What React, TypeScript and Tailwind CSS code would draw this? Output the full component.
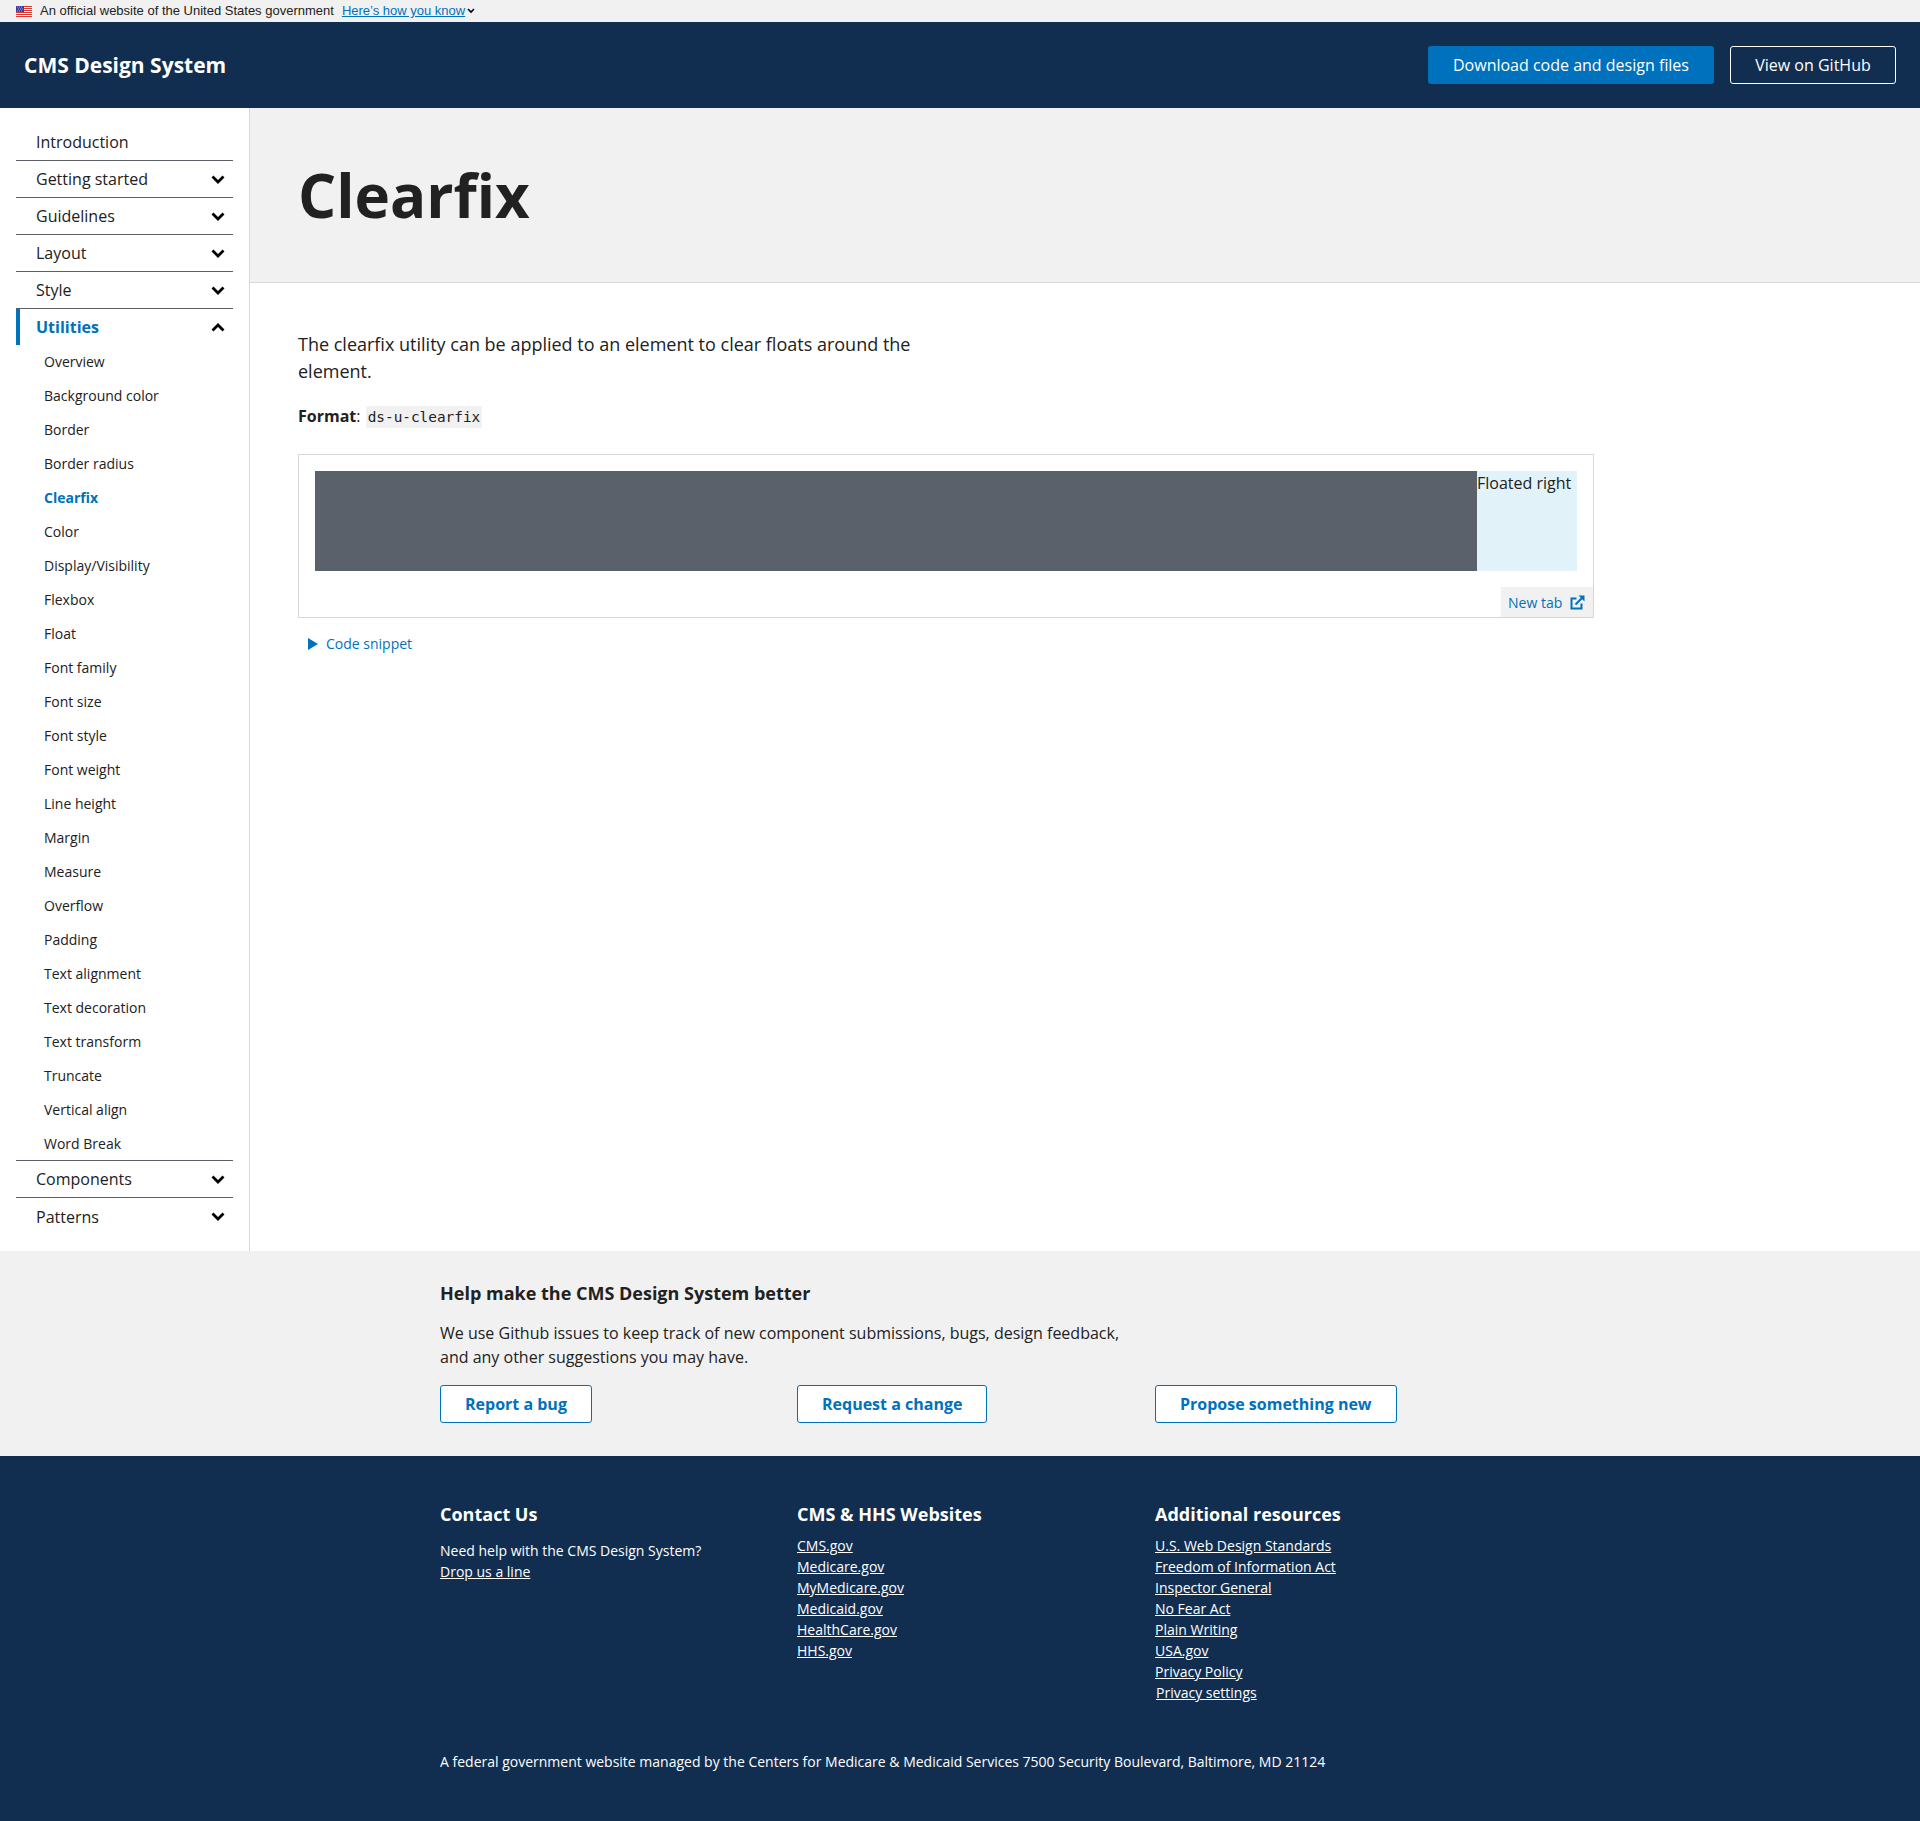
import React from 'react';

const utilities = [
  'Overview',
  'Background color',
  'Border',
  'Border radius',
  'Clearfix',
  'Color',
  'Display/Visibility',
  'Flexbox',
  'Float',
  'Font family',
  'Font size',
  'Font style',
  'Font weight',
  'Line height',
  'Margin',
  'Measure',
  'Overflow',
  'Padding',
  'Text alignment',
  'Text decoration',
  'Text transform',
  'Truncate',
  'Vertical align',
  'Word Break',
];

const hhsSites = ['CMS.gov', 'Medicare.gov', 'MyMedicare.gov', 'Medicaid.gov', 'HealthCare.gov', 'HHS.gov'];

const resources = [
  'U.S. Web Design Standards',
  'Freedom of Information Act',
  'Inspector General',
  'No Fear Act',
  'Plain Writing',
  'USA.gov',
  'Privacy Policy',
  'Privacy settings',
];

const Flag = () => (
  <svg width="16" height="11" viewBox="0 0 16 11" className="shrink-0">
    <rect width="16" height="11" fill="#fff" />
    <rect width="16" height="1" y="0" fill="#d83933" />
    <rect width="16" height="1" y="2" fill="#d83933" />
    <rect width="16" height="1" y="4" fill="#d83933" />
    <rect width="16" height="1" y="6" fill="#d83933" />
    <rect width="16" height="1" y="8" fill="#d83933" />
    <rect width="16" height="1" y="10" fill="#d83933" />
    <rect width="8" height="6" fill="#3b3b9e" />
    <path d="M1 1h1M3 1h1M5 1h1M2 3h1M4 3h1M6 3h1M1 5h1M3 5h1M5 5h1" stroke="#c9c9f0" strokeWidth="0.8" />
  </svg>
);

// chunky chevron, same shape as the font icon in the nav
const Chevron = ({ up }: { up?: boolean }) => (
  <svg width="14" height="9" viewBox="0 0 14 9" fill="none" stroke="#000" strokeWidth="2.8" className="shrink-0">
    <polyline points={up ? '1.5,7.5 7,2 12.5,7.5' : '1.5,1.5 7,7 12.5,1.5'} />
  </svg>
);

const NavRow = ({ label, last }: { label: string; last?: boolean }) => (
  <div
    className={
      'flex h-[37px] items-center justify-between pr-[8px] ' + (last ? '' : 'border-b border-[#5a5f68]')
    }
  >
    <span className="pl-[20px] text-[16px]">{label}</span>
    <Chevron />
  </div>
);

const Sidebar = () => (
  <aside className="w-[250px] shrink-0 border-r border-[#d6d7d9] px-[16px] pt-[16px] text-[#212121]">
    <div className="flex h-[37px] items-center border-b border-[#5a5f68] pl-[20px] text-[16px]">Introduction</div>
    <NavRow label="Getting started" />
    <NavRow label="Guidelines" />
    <NavRow label="Layout" />
    <NavRow label="Style" />
    <div className="flex h-[36px] items-center justify-between border-l-4 border-[#0071bc] pr-[8px]">
      <span className="pl-[16px] text-[16px] font-bold text-[#0071bc]">Utilities</span>
      <Chevron up />
    </div>
    <ul className="-mt-[1px] border-b border-[#5a5f68]">
      {utilities.map((item) => (
        <li
          key={item}
          className={
            'flex h-[34px] items-center pl-[28px] text-[14px] ' +
            (item === 'Clearfix' ? 'font-bold text-[#0071bc]' : '')
          }
        >
          {item}
        </li>
      ))}
    </ul>
    <NavRow label="Components" />
    <NavRow label="Patterns" last />
  </aside>
);

const App = () => {
  return (
    <div className="min-h-[1821px] bg-white font-['Open_Sans',sans-serif] text-[#212121]">
      {/* Gov banner */}
      <div className="flex h-[22px] items-center bg-[#f1f1f1] pl-[16px] font-['Liberation_Sans',sans-serif] text-[13px]">
        <Flag />
        <span className="ml-[8px]">An official website of the United States government</span>
        <a className="ml-[8px] text-[#0071bc] underline">Here’s how you know</a>
        <svg width="8" height="6" viewBox="0 0 8 6" fill="none" stroke="#000" strokeWidth="1.6" className="ml-[2px]">
          <polyline points="1,1 4,4 7,1" />
        </svg>
      </div>

      {/* Header */}
      <header className="flex h-[86px] items-center justify-between bg-[#112e51] px-[24px]">
        <div className="pt-[1px] text-[21px] font-bold text-white">CMS Design System</div>
        <div className="flex gap-[16px]">
          <a className="flex h-[38px] w-[286px] items-center justify-center rounded-[3px] bg-[#0071bc] text-[16px] text-white">
            Download code and design files
          </a>
          <a className="flex h-[38px] w-[166px] items-center justify-center rounded-[3px] border border-white text-[16px] text-white">
            View on GitHub
          </a>
        </div>
      </header>

      <div className="flex h-[1143px]">
        <Sidebar />
        <main className="min-w-0 flex-1">
          <div className="flex h-[175px] items-center border-b border-[#d6d7d9] bg-[#f1f1f1] pl-[48px]">
            <h1 className="text-[60px] leading-none font-bold">Clearfix</h1>
          </div>
          <div className="pt-[48px] pl-[48px]">
            <p className="w-[640px] text-[18px] leading-[27px]">
              The clearfix utility can be applied to an element to clear floats around the element.
            </p>
            <p className="mt-[19px] text-[16px] leading-[24px]">
              <strong>Format</strong>:{' '}
              <code className="ml-[1px] rounded-[2px] bg-[#f1f1f1] px-[2px] py-[3px] font-['DejaVu_Sans_Mono',monospace] text-[14.4px]">
                ds-u-clearfix
              </code>
            </p>

            {/* Preview */}
            <div className="relative mt-[25px] h-[164px] w-[1296px] border border-[#d6d7d9] p-[16px]">
              <div className="flex h-[100px]">
                <div className="flex-1 bg-[#5b616b]"></div>
                <div className="w-[100px] bg-[#e1f3f8] text-[16px] leading-[24px]">Floated right</div>
              </div>
              <a className="absolute right-0 bottom-0 flex h-[30px] w-[92px] items-center gap-[8px] bg-[#f1f1f1] pl-[7px] text-[14px] text-[#0071bc]">
                New tab
                <svg width="15" height="15" viewBox="0 0 15 15" fill="none" stroke="#0071bc" strokeWidth="2">
                  <path d="M6.5 3.5H1.5v10h10V8.5" />
                  <path d="M5.5 9.5l7-7" />
                  <path d="M8.5 .5h6v6z" fill="#0071bc" stroke="none" />
                </svg>
              </a>
            </div>

            <div className="mt-[15px] flex items-center pl-[10px] text-[14px] text-[#0071bc]">
              <svg width="10" height="12" viewBox="0 0 10 12" className="mr-[8px]">
                <path d="M0 0l10 6-10 6z" fill="#0071bc" />
              </svg>
              Code snippet
            </div>
          </div>
        </main>
      </div>

      {/* Help section */}
      <section className="h-[205px] bg-[#f1f1f1] pt-[29px]">
        <div className="mx-auto w-[1040px]">
          <h2 className="text-[18px] leading-[27px] font-bold">Help make the CMS Design System better</h2>
          <p className="mt-[14px] w-[700px] text-[16px] leading-[24px]">
            We use Github issues to keep track of new component submissions, bugs, design feedback, and any other
            suggestions you may have.
          </p>
          <div className="mt-[16px] grid grid-cols-[357px_358px_1fr] text-[16px] font-bold text-[#0071bc]">
            <div>
              <a className="inline-flex h-[38px] items-center rounded-[3px] border border-[#0071bc] bg-white px-[24px]">
                Report a bug
              </a>
            </div>
            <div>
              <a className="inline-flex h-[38px] items-center rounded-[3px] border border-[#0071bc] bg-white px-[24px]">
                Request a change
              </a>
            </div>
            <div>
              <a className="inline-flex h-[38px] items-center rounded-[3px] border border-[#0071bc] bg-white px-[24px]">
                Propose something new
              </a>
            </div>
          </div>
        </div>
      </section>

      {/* Footer */}
      <footer className="h-[365px] bg-[#112e51] pt-[45px] text-white">
        <div className="mx-auto w-[1040px] text-[14px] leading-[21px]">
          <div className="grid h-[220px] grid-cols-[357px_358px_1fr]">
            <div>
              <h3 className="text-[18px] leading-[27px] font-bold">Contact Us</h3>
              <p className="mt-[12px]">Need help with the CMS Design System?</p>
              <a className="underline">Drop us a line</a>
            </div>
            <div>
              <h3 className="text-[18px] leading-[27px] font-bold">CMS &amp; HHS Websites</h3>
              <ul className="mt-[7px]">
                {hhsSites.map((site) => (
                  <li key={site} className="underline">
                    {site}
                  </li>
                ))}
              </ul>
            </div>
            <div>
              <h3 className="text-[18px] leading-[27px] font-bold">Additional resources</h3>
              <ul className="mt-[7px]">
                {resources.map((link) => (
                  <li key={link} className={link === 'Privacy settings' ? 'pl-[1px] underline' : 'underline'}>
                    {link}
                  </li>
                ))}
              </ul>
            </div>
          </div>
          <p className="mt-[30px]">
            A federal government website managed by the Centers for Medicare &amp; Medicaid Services 7500 Security
            Boulevard, Baltimore, MD 21124
          </p>
        </div>
      </footer>
    </div>
  );
};

export default App;
